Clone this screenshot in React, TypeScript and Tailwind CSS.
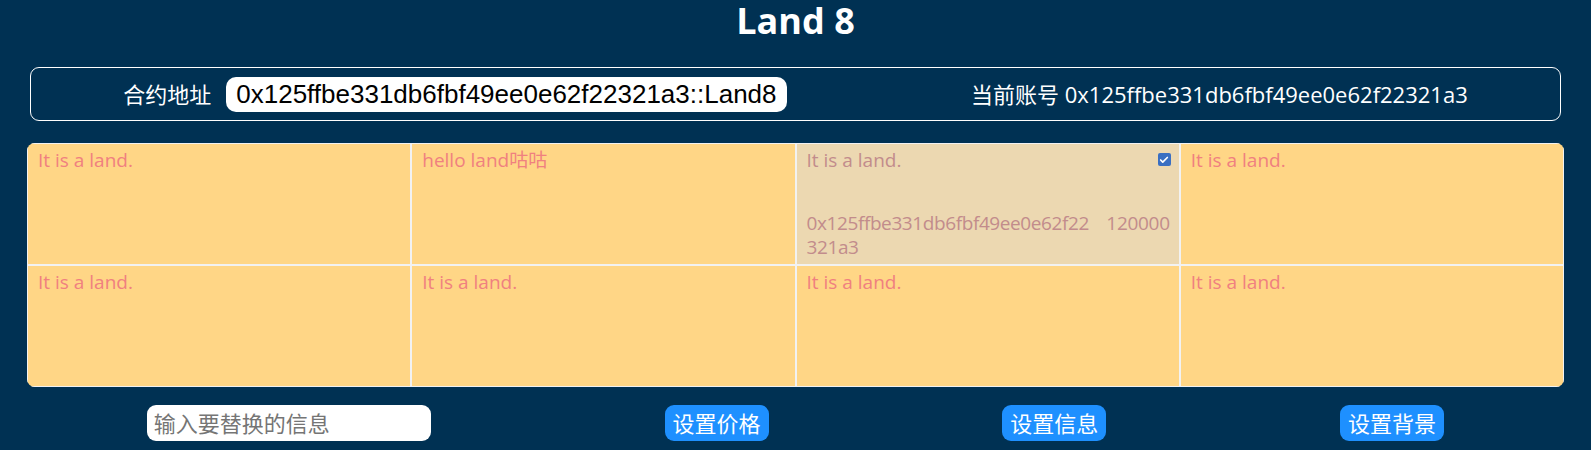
import { Check } from "lucide-react";

type Land = {
  info: string;
  owner?: string;
  price?: string;
  selected?: boolean;
};

const lands: Land[] = [
  { info: "It is a land." },
  { info: "hello land咕咕" },
  { info: "It is a land.", owner: "0x125ffbe331db6fbf49ee0e62f22321a3", price: "120000", selected: true },
  { info: "It is a land." },
  { info: "It is a land." },
  { info: "It is a land." },
  { info: "It is a land." },
  { info: "It is a land." },
];

const LandCell = ({ land }: { land: Land }) => {
  if (!land.selected) {
    return (
      <div className="h-[122px] border border-[#f2f2f2] bg-[#ffd686] px-[10px] pt-[4px] text-[19px] leading-[24px] text-[#f08080]">
        {land.info}
      </div>
    );
  }

  return (
    <div className="flex h-[122px] flex-col justify-between border border-[#f2f2f2] bg-[#ecd8b1] pl-[10px] pr-[8px] pt-[4px] pb-[5px] text-[19px] leading-[24px] text-[#c28c8c]">
      <div className="flex items-start justify-between">
        <span>{land.info}</span>
        <span className="mt-[5px] flex h-[13px] w-[13px] items-center justify-center rounded-[2px] bg-[#3a6fc2]">
          <Check className="h-[10px] w-[10px] text-white" strokeWidth={4} />
        </span>
      </div>
      <div className="flex items-start justify-between">
        <span className="tracking-[-0.4px]">
          {land.owner?.slice(0, 29)}
          <br />
          {land.owner?.slice(29)}
        </span>
        <span className="shrink-0 pr-[1px] tracking-[-0.3px]">{land.price}</span>
      </div>
    </div>
  );
};

const App = () => {
  return (
    <div className="min-h-[450px] bg-[#003153] font-['Open_Sans','Noto_Sans_CJK_SC',sans-serif] text-white">
      {/* Title */}
      <h1 className="text-center text-[36px] font-bold leading-[42px]">Land 8</h1>

      {/* Contract / account bar */}
      <div className="mx-[30px] mt-[25px] flex h-[54px] items-center justify-around rounded-[9px] border border-white text-[22px]">
        <div className="flex items-center gap-[15px]">
          <span>合约地址</span>
          <div className="flex h-[35px] items-center rounded-[10px] bg-white px-[10px] font-['Liberation_Sans',sans-serif] text-[26px] text-black">
            0x125ffbe331db6fbf49ee0e62f22321a3::Land8
          </div>
        </div>
        <div>当前账号 0x125ffbe331db6fbf49ee0e62f22321a3</div>
      </div>

      {/* Land grid */}
      <div className="mx-auto mt-[22px] grid w-[1537px] grid-cols-4 overflow-hidden rounded-[8px]">
        {lands.map((land, i) => (
          <LandCell key={i} land={land} />
        ))}
      </div>

      {/* Actions */}
      <div className="mx-[30px] mt-[18px] flex items-center justify-around text-[22px]">
        <input
          placeholder="输入要替换的信息"
          className="h-[36px] w-[284px] rounded-[9px] bg-white px-[7px] text-black outline-none placeholder:text-[#757575]"
        />
        <button className="h-[36px] rounded-[9px] bg-[#1e90ff] px-[8px] leading-[36px] text-white">设置价格</button>
        <button className="h-[36px] rounded-[9px] bg-[#1e90ff] px-[8px] leading-[36px] text-white">设置信息</button>
        <button className="h-[36px] rounded-[9px] bg-[#1e90ff] px-[8px] leading-[36px] text-white">设置背景</button>
      </div>
    </div>
  );
};

export default App;
